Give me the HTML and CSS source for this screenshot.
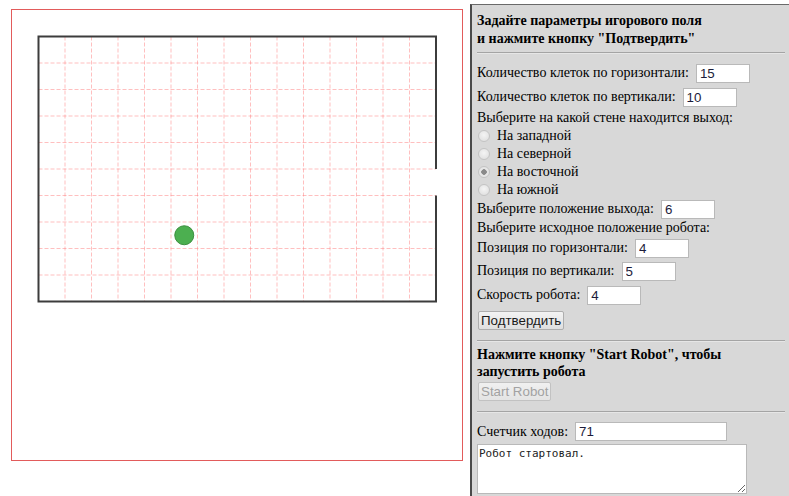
FILE: index.html
```html
<!DOCTYPE html>
<html lang="ru">
<head>
<meta charset="utf-8">
<title>Робот в лабиринте</title>
<link rel="stylesheet" href="styles.css">
</head>
<body>
<div class="page">
  <div class="board">
    <svg width="450" height="450" viewBox="0 0 450 450">
      <!-- cell grid: 15 x 10 cells, 26.5px each, one cell margin -->
      <path class="grid" d="M53 26.5V291.5M79.5 26.5V291.5M106 26.5V291.5M132.5 26.5V291.5M159 26.5V291.5M185.5 26.5V291.5M212 26.5V291.5M238.5 26.5V291.5M265 26.5V291.5M291.5 26.5V291.5M318 26.5V291.5M344.5 26.5V291.5M371 26.5V291.5M397.5 26.5V291.5
        M26.5 53H424M26.5 79.5H424M26.5 106H424M26.5 132.5H424M26.5 159H424M26.5 185.5H424M26.5 212H424M26.5 238.5H424M26.5 265H424"/>
      <!-- outer walls with the exit on the east side -->
      <path class="wall" d="M424 159V26.5H26.5V291.5H424V185.5"/>
      <circle class="robot" cx="172.25" cy="225.25" r="9.5"/>
    </svg>
  </div>

  <form class="panel">
    <div class="title">Задайте параметры игорового поля<br>и нажмите кнопку "Подтвердить"</div>
    <hr class="rule">

    <div class="field"><span>Количество клеток по горизонтали:</span><input class="num" value="15"></div>
    <div class="field"><span>Количество клеток по вертикали:</span><input class="num" value="10"></div>
    <div class="line">Выберите на какой стене находится выход:</div>
    <label class="choice"><input type="radio" name="exit" class="radio"><span>На западной</span></label>
    <label class="choice"><input type="radio" name="exit" class="radio"><span>На северной</span></label>
    <label class="choice"><input type="radio" name="exit" class="radio" checked><span>На восточной</span></label>
    <label class="choice"><input type="radio" name="exit" class="radio"><span>На южной</span></label>
    <div class="field short"><span>Выберите положение выхода:</span><input class="num" value="6"></div>
    <div class="line">Выберите исходное положение робота:</div>
    <div class="field mid"><span>Позиция по горизонтали:</span><input class="num" value="4"></div>
    <div class="field"><span>Позиция по вертикали:</span><input class="num" value="5"></div>
    <div class="field"><span>Скорость робота:</span><input class="num" value="4"></div>
    <div class="actions"><button type="button" class="btn">Подтвердить</button></div>
    <hr class="rule after-confirm">

    <div class="title compact">Нажмите кнопку "Start Robot", чтобы<br>запустить робота</div>
    <div class="actions start"><button type="button" class="btn" disabled>Start Robot</button></div>
    <hr class="rule after-start">

    <div class="field counter"><span>Счетчик ходов:</span><input class="num wide" value="71"></div>
    <textarea class="log">Робот стартовал.</textarea>
  </form>
</div>
</body>
</html>
```

FILE: styles.css
```css
body {
  margin: 0;
  background: #fff;
  color: #000;
  font-family: "Liberation Serif", "Times New Roman", serif;
  font-size: 14px;
  overflow: hidden;
}

.page {
  display: flex;
  align-items: flex-start;
}

/* playing field */
.board {
  flex: none;
  width: 450px;
  height: 450px;
  margin: 9px 0 0 11px;
  border: 1px solid #e25b5b;
}

.board svg {
  display: block;
}

.grid {
  fill: none;
  stroke: #ff8080;
  stroke-opacity: 0.5;
  stroke-width: 1;
  stroke-dasharray: 4 2;
}

.wall {
  fill: none;
  stroke: #3c3c3c;
  stroke-width: 2;
}

.robot {
  fill: #4caf50;
  stroke: #3b8f3e;
  stroke-width: 1;
}

/* settings panel */
.panel {
  flex: none;
  box-sizing: border-box;
  width: 319px;
  min-height: 492px;
  margin: 4px 0 0 7px;
  padding: 7px 4px 0 5px;
  background: #d8d8d8;
  border-left: 2px solid #4a4a4a;
  border-top: 1px solid #6a6a6a;
}

.title {
  font-weight: bold;
  line-height: 18px;
}

.title.compact {
  line-height: 17px;
}

.rule {
  height: 0;
  margin: 4px 0 7px;
  border: 0;
  border-top: 1px solid #a4a4a4;
  border-bottom: 1px solid #e6e6e6;
}

.rule.after-confirm {
  margin: 10px 0 4px;
}

.rule.after-start {
  margin: 10px 0 8px;
}

.field {
  display: flex;
  align-items: center;
  gap: 7px;
  height: 24px;
}

.field.short {
  height: 20px;
}

.field.mid {
  height: 22px;
}

.line {
  line-height: 18px;
}

.num {
  box-sizing: border-box;
  width: 54px;
  height: 19px;
  margin: 0;
  padding: 0 3px;
  border: 1px solid #b9b9b9;
  background: #fff;
  color: #1c1c3a;
  font-family: "Liberation Sans", Arial, sans-serif;
  font-size: 13.33px;
}

.num.wide {
  width: 152px;
}

.choice {
  display: flex;
  align-items: center;
  gap: 7px;
  height: 18px;
}

.radio {
  appearance: none;
  box-sizing: border-box;
  width: 12px;
  height: 12px;
  margin: 0 0 0 1px;
  border: 1px solid #c4c4c4;
  border-radius: 50%;
  background: radial-gradient(circle at 50% 40%, #f4f4f4, #dcdcdc);
}

.radio:checked {
  background: radial-gradient(circle, #8a8a8a 0 2.5px, #e6e6e6 3px);
}

.actions {
  padding: 4px 0 0 1px;
}

.actions.start {
  padding-top: 2px;
}

.btn {
  box-sizing: border-box;
  display: block;
  height: 19px;
  padding: 0 2px;
  border: 1px solid #aeaeae;
  border-radius: 2px;
  background: linear-gradient(#f3f3f3, #dfdfdf);
  color: #1a1a1a;
  font-family: "Liberation Sans", Arial, sans-serif;
  font-size: 13.33px;
  line-height: 17px;
}

.btn:disabled {
  color: #a2a2a2;
  border-color: #c2c2c2;
  background: linear-gradient(#f0f0f0, #e4e4e4);
}

.counter {
  height: 21px;
}

.log {
  display: block;
  box-sizing: border-box;
  width: 270px;
  height: 50px;
  margin: 2px 0 0;
  padding: 2px 1px;
  border: 1px solid #b9b9b9;
  background: #fff;
  color: #222;
  font-family: "DejaVu Sans Mono", "Liberation Mono", monospace;
  font-size: 11px;
  line-height: 14px;
}
```
